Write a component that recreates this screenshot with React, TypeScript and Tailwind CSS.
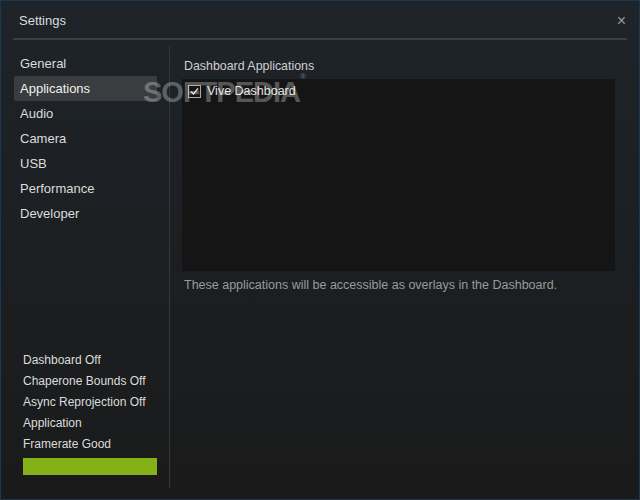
const navItems = ["General", "Applications", "Audio", "Camera", "USB", "Performance", "Developer"]
const statusItems = ["Dashboard Off", "Chaperone Bounds Off", "Async Reprojection Off", "Application", "Framerate Good"]

export default function App() {
  return (
    <div
      className="relative w-[640px] h-[500px] overflow-hidden border border-[#1c3850] bg-gradient-to-b from-[#1e242a] to-[#1a1a1a] text-[#d8d8d8] flex flex-col"
      style={{ fontFamily: '"Liberation Sans", Arial, sans-serif' }}
    >
      <div className="flex items-center justify-between h-[37px] pl-[18px] pr-[13px] pt-[3px]">
        <span className="text-[13px] text-[#dcdcdc]">Settings</span>
        <span className="text-[16px] text-[#9a9a9a] leading-none">×</span>
      </div>
      <div className="mx-[12px] h-[2px] bg-[#3c3f42]" />

      <div className="flex flex-1 pt-[6px] pb-[11px]">
        <div className="w-[143px] ml-[13px] mr-[12px] flex flex-col pb-[13px]">
          <div className="flex flex-col pt-[5px]">
            {navItems.map((item) => (
              <div
                key={item}
                className={
                  "h-[25px] flex items-center px-[6px] text-[13px] rounded-[2px] " +
                  (item === "Applications" ? "bg-[#3a3c3f] text-[#f0f0f0]" : "text-[#dcdcdc]")
                }
              >
                {item}
              </div>
            ))}
          </div>
          <div className="mt-auto flex flex-col pl-[9px]">
            {statusItems.map((item) => (
              <div key={item} className="h-[21px] flex items-center text-[12px] text-[#dcdcdc]">
                {item}
              </div>
            ))}
            <div className="h-[17px] mt-[4px] bg-[#84b118]" />
          </div>
        </div>

        <div className="w-px bg-[#34373a]" />

        <div className="flex-1 flex flex-col pl-[12px] pr-[24px] pt-[11px]">
          <div className="text-[12.4px] text-[#d0d0d0] pl-[2px] h-[19px] leading-[19px] mb-[3px]">Dashboard Applications</div>
          <div className="h-[192px] bg-[#151515] pt-[3px] pl-[6px]">
            <label className="flex items-center gap-[6px] text-[12.5px] text-[#e0e0e0]">
              <span className="w-[13px] h-[13px] border border-[#a8a8a8] flex items-center justify-center">
                <svg width="11" height="11" viewBox="0 0 11 11">
                  <path d="M2 5.5 L4.5 8 L9 2.5" fill="none" stroke="#d8d8d8" strokeWidth="1.5" />
                </svg>
              </span>
              Vive Dashboard
            </label>
          </div>
          <div className="text-[12.5px] text-[#9a9a9a] pl-[2px] mt-[5px]">
            These applications will be accessible as overlays in the Dashboard.
          </div>
        </div>
      </div>

      <div className="absolute left-[142px] top-[70px] text-[29px] font-bold tracking-[-1px] text-white/30 pointer-events-none">
        SOFTPEDIA<span className="text-[8px] align-top">®</span>
      </div>
    </div>
  )
}
